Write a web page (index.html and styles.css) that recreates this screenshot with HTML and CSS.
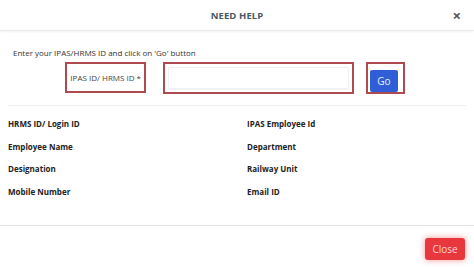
FILE: index.html
```html
<!DOCTYPE html>
<html>
<head>
	<meta charset="UTF-8">
	<title>Need Help</title>
	<link rel="stylesheet" href="styles.css">
</head>
<body>
<div class="modal">
	<div class="modal-header">
		<span></span>
		<h1 class="title">NEED HELP</h1>
		<span class="close-x">&times;</span>
	</div>
	<div class="modal-body">
		<p class="hint">Enter your IPAS/HRMS ID and click on 'Go' button</p>
		<div class="search">
			<div class="mark label-box">
				<label for="ipas">IPAS ID/ HRMS ID *</label>
			</div>
			<div class="mark input-box">
				<input id="ipas" type="text"/>
			</div>
			<div class="mark go-box">
				<button class="go">Go</button>
			</div>
		</div>
		<div class="info">
			<div class="field">HRMS ID/ Login ID</div>
			<div class="field">IPAS Employee Id</div>
			<div class="field">Employee Name</div>
			<div class="field">Department</div>
			<div class="field">Designation</div>
			<div class="field">Railway Unit</div>
			<div class="field">Mobile Number</div>
			<div class="field">Email ID</div>
		</div>
	</div>
	<div class="modal-footer">
		<button class="close">Close</button>
	</div>
</div>
</body>
</html>
```
FILE: styles.css
```css
body {
	margin: 0;
	background-color: #FFF;
	font-family: "Open Sans", "Liberation Sans", sans-serif;
	color: #333;
}
.modal {
	width: 474px;
	height: 267px;
	display: flex;
	flex-direction: column;
}
.modal-header {
	height: 30px;
	flex-shrink: 0;
	display: grid;
	grid-template-columns: 1fr auto 1fr;
	align-items: center;
	border-bottom: 1px solid #e9ecef;
	box-shadow: 0 1px 2px rgba(0, 0, 0, .05);
}
.title {
	margin: 0;
	font-size: 9.5px;
	font-weight: 700;
	color: #4a5766;
	letter-spacing: .1px;
}
.close-x {
	justify-self: end;
	margin-right: 13px;
	font-size: 15px;
	font-weight: 700;
	color: #555;
	line-height: 1;
}
.modal-body {
	padding: 0 8px;
}
.hint {
	margin: 16px 0 0 5px;
	font-size: 8px;
	line-height: 11px;
	color: #333;
}
.search {
	display: flex;
	align-items: flex-start;
	margin-top: 4px;
	padding: 0 0 11px 57px;
	border-bottom: 1px solid #eceef0;
}
.mark {
	box-sizing: border-box;
	border: 2px solid #ad4b50;
	height: 31px;
	display: flex;
	align-items: center;
}
.label-box {
	width: 81px;
	justify-content: flex-end;
	padding-right: 3px;
	font-size: 8px;
	color: #444;
}
.input-box {
	width: 191px;
	height: 32px;
	margin-left: 17px;
	padding: 0 3px 0 3px;
}
.input-box input {
	box-sizing: border-box;
	width: 100%;
	height: 22px;
	border: 1px solid #eef0f2;
	border-radius: 2px;
	box-shadow: 0 1px 2px rgba(0, 0, 0, .06);
	outline: none;
}
.go-box {
	width: 39px;
	height: 32px;
	margin-left: 12px;
	padding: 6px 0 0 2px;
	align-items: flex-start;
}
.go {
	width: 28px;
	height: 22px;
	border: none;
	border-radius: 2px;
	background-color: #2f5ed6;
	color: #e8eeff;
	font-family: inherit;
	font-size: 10px;
	padding: 0;
}
.info {
	display: grid;
	grid-template-columns: 239px 1fr;
	align-content: start;
	row-gap: 11px;
	padding-top: 12px;
	height: 119px;
	box-sizing: border-box;
}
.field {
	font-size: 8px;
	font-weight: 700;
	color: #222;
	line-height: 11.5px;
}
.modal-footer {
	flex: 1;
	border-top: 1px solid #e3e6e9;
	display: flex;
	justify-content: flex-end;
	align-items: flex-start;
	padding: 12px 9px 0 0;
}
.close {
	width: 40px;
	height: 22px;
	border: none;
	border-radius: 3px;
	background-color: #e8383d;
	color: #ffd4d4;
	font-family: inherit;
	font-size: 10px;
	padding: 0;
	box-shadow: 0 0 6px rgba(232, 56, 61, .55);
}
```
